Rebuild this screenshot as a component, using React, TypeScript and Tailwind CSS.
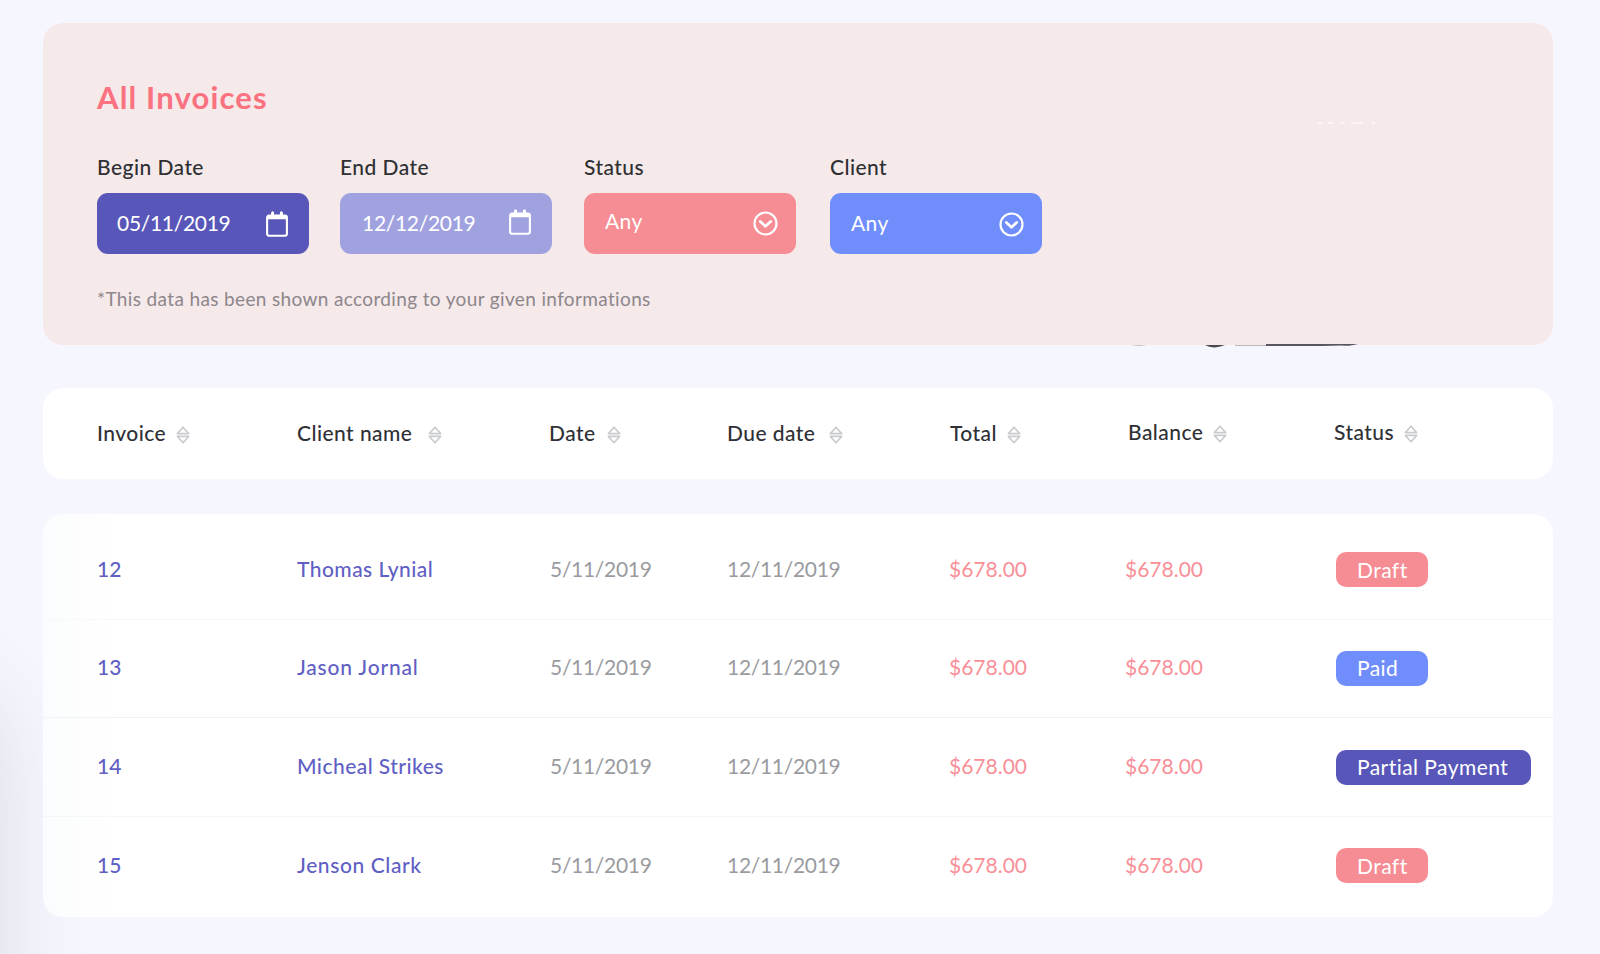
const headers = [
  { label: "Invoice", width: "w-[79px]", lift: "" },
  { label: "Client name", width: "w-[131px]", lift: "" },
  { label: "Date", width: "w-[58px]", lift: "" },
  { label: "Due date", width: "w-[102px]", lift: "" },
  { label: "Total", width: "w-[57px]", lift: "" },
  { label: "Balance", width: "w-[85px]", lift: "pb-[2px]" },
  { label: "Status", width: "w-[70px]", lift: "pb-[2px]" },
];

const rows = [
  { id: "12", client: "Thomas Lynial", spacing: "tracking-[0.45px]", status: "Draft", badge: "w-[92px] bg-[#f68c94]", row: "h-[106px] pt-[4px] border-b border-[#f7f8f9]" },
  { id: "13", client: "Jason Jornal", spacing: "tracking-[0.8px]", status: "Paid", badge: "w-[92px] bg-[#6f8efc]", row: "h-[98px] pb-[3px] border-b border-[#f1f4f6]" },
  { id: "14", client: "Micheal Strikes", spacing: "tracking-[0.45px]", status: "Partial Payment", badge: "w-[195px] bg-[#5857b9]", row: "h-[99px] pb-[2px] border-b border-[#f4f7f7]" },
  { id: "15", client: "Jenson Clark", spacing: "tracking-[0.6px]", status: "Draft", badge: "w-[92px] bg-[#f68c94]", row: "h-[100px] pb-[5px]" },
];

function SortIcon() {
  return (
    <svg width="14" height="18" viewBox="0 0 14 18" fill="none" stroke="#c9cbce" strokeWidth="1.6" strokeLinejoin="round">
      <path d="M7 1.2 12.7 7.6H1.3Z" />
      <path d="M7 16.8 12.7 10.4H1.3Z" />
    </svg>
  );
}

function CalendarIcon() {
  return (
    <svg width="22" height="26" viewBox="0 0 22 26" fill="none">
      <rect x="1.1" y="4.6" width="19.8" height="20.2" rx="2" stroke="white" strokeWidth="2.1" />
      <path d="M1 8.3V5.6Q1 4 3 4H19Q21 4 21 5.6V8.3Z" fill="white" />
      <path d="M6.6 1.7V5M15.4 1.7V5" stroke="white" strokeWidth="3" strokeLinecap="round" />
    </svg>
  );
}

function ChevronIcon() {
  return (
    <svg width="25" height="25" viewBox="0 0 25 25" fill="none" stroke="white" strokeLinecap="round" strokeLinejoin="round">
      <circle cx="12.5" cy="12.5" r="11" strokeWidth="2.2" />
      <path d="M7.3 10.5 12.5 15.2 17.7 10.5" strokeWidth="2.8" />
    </svg>
  );
}

function DateField({ label, value, box, iconBox }: { label: string; value: string; box: string; iconBox: string }) {
  return (
    <div className="w-[212px]">
      <div className="h-[38px] font-medium leading-[24px] text-[#2f3033]">{label}</div>
      <div className={`flex h-[61px] items-center justify-between rounded-[11px] pr-[21px] text-white ${box}`}>
        <span className="pb-[2px] tracking-[-0.3px]">{value}</span>
        <span className={iconBox}><CalendarIcon /></span>
      </div>
    </div>
  );
}

function SelectField({ label, box, textBox, iconBox }: { label: string; box: string; textBox: string; iconBox: string }) {
  return (
    <div className="w-[212px]">
      <div className="h-[38px] font-medium leading-[24px] text-[#2f3033]">{label}</div>
      <div className={`flex h-[61px] items-center justify-between rounded-[11px] pl-[21px] pr-[18px] text-white ${box}`}>
        <span className={textBox}>Any</span>
        <span className={iconBox}><ChevronIcon /></span>
      </div>
    </div>
  );
}

export default function App() {
  return (
    <div className="relative h-[954px] w-[1600px] overflow-hidden bg-[#f5f6fe] pl-[43px] pt-[23px] font-['Lato','Noto_Sans',sans-serif] text-[21px] tracking-[0.45px] [font-variant-ligatures:none]">
      <div className="absolute -left-[130px] top-[710px] h-[420px] w-[100px] rounded-[50px] shadow-[0_0_90px_30px_#dcdce4]" />

      <section className="relative h-[322px] w-[1510px] rounded-[20px] bg-[#f5e9ea] pl-[54px] pt-[54px]">
        <h1 className="h-[62px] text-[31px] font-bold leading-[40px] tracking-[1.15px] text-[#fa7180]">All Invoices</h1>
        <div className="mt-[16px] flex">
          <div className="mr-[31px]">
            <DateField label="Begin Date" value="05/11/2019" box="bg-[#5857b9] pl-[20px]" iconBox="pt-[1px]" />
          </div>
          <div className="mr-[32px]">
            <DateField label="End Date" value="12/12/2019" box="bg-[#a0a2e0] pl-[22px]" iconBox="pb-[3px]" />
          </div>
          <div className="mr-[34px]">
            <SelectField label="Status" box="bg-[#f68c94]" textBox="pb-[6px]" iconBox="" />
          </div>
          <SelectField label="Client" box="bg-[#6f8efc]" textBox="pb-[2px]" iconBox="pt-[2px]" />
        </div>
        <p className="mt-[32px] text-[19px] leading-[26px] tracking-[0.36px] text-[#8d868a]">*This data has been shown according to your given informations</p>

        <svg className="absolute left-[1270px] top-[99px]" width="70" height="3" viewBox="0 0 70 3" fill="#fbf5f5">
          <path d="M5 0h4v2h-4zM15 0h5v2h-5zM27 0h4v2h-4zM38 0h12v2h-12zM59 0h3v2h-3z" />
        </svg>
        <svg className="absolute left-[1080px] top-[320px]" width="250" height="6" viewBox="0 0 250 6">
          <path d="M8 2h16q-8 1.6-16 0Z" fill="#b5b3b8" />
          <path d="M82 2h20q-6 2.5-11 2.4t-9-2.4Z" fill="#4a484e" />
          <path d="M112 2h32v1h-32Z" fill="#b9b8be" />
          <path d="M143 1h92l-6 1.2q-5 1-10 .4l-20 .4h-56Z" fill="#59575d" />
        </svg>
      </section>

      <section className="relative mt-[43px] grid h-[91px] w-[1510px] grid-cols-[200px_252px_178px_223px_178px_206px_auto] items-center rounded-[20px] bg-white pl-[54px] font-medium text-[#2f3136]">
        {headers.map((h) => (
          <div key={h.label} className={`flex items-center ${h.lift}`}>
            <span className={`${h.width} whitespace-nowrap pb-[2px]`}>{h.label}</span>
            <span className="pt-[2px]"><SortIcon /></span>
          </div>
        ))}
      </section>

      <section className="relative mt-[35px] h-[403px] w-[1510px] overflow-hidden rounded-[20px] bg-white bg-linear-to-r from-[#fbfcfd] to-white to-[5%]">
        {rows.map((r) => (
          <div key={r.id} className={`grid grid-cols-[200px_253px_177px_222px_176px_211px_auto] items-center pl-[54px] ${r.row}`}>
            <span className="font-medium tracking-[0px] text-[#5f5fc4]">{r.id}</span>
            <span className={`font-medium text-[#5f5fc4] ${r.spacing}`}>{r.client}</span>
            <span className="tracking-[-0.3px] text-[#9a9b9f]">5/11/2019</span>
            <span className="tracking-[-0.3px] text-[#9a9b9f]">12/11/2019</span>
            <span className="tracking-[0px] text-[#f98f98]">$678.00</span>
            <span className="tracking-[0px] text-[#f98f98]">$678.00</span>
            <span className={`mt-[2px] flex h-[35px] items-center whitespace-nowrap rounded-[10px] pl-[21px] text-white ${r.badge}`}>{r.status}</span>
          </div>
        ))}
      </section>
    </div>
  );
}
